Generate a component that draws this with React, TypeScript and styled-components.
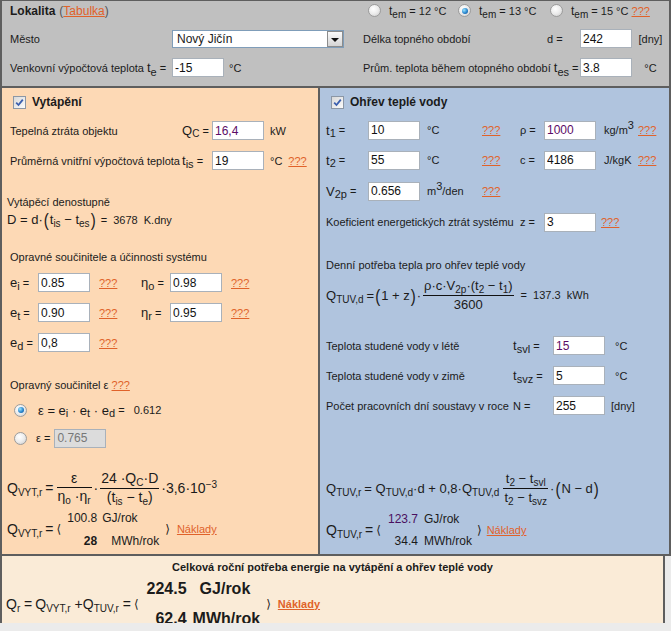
import React from "react";
import styled, { createGlobalStyle } from "styled-components";

const FONT = `"Liberation Sans", Arial, sans-serif`;
const BORDER = "#5e5e5e";

const GlobalStyle = createGlobalStyle`
  *, *::before, *::after { box-sizing: border-box; }
  html, body { margin: 0; padding: 0; }
  body {
    background: #ebebeb;
    font-family: ${FONT};
    font-size: 11px;
    color: #1b1b1b;
  }
`;

const Page = styled.div`
  width: 671px;
  height: 631px;
  overflow: hidden;
`;

/* ---------- small bits ---------- */

const Link = styled.a<{ $bold?: boolean }>`
  color: #e0622a;
  text-decoration: underline;
  font-weight: ${(p) => (p.$bold ? 700 : 400)};
  cursor: pointer;
`;

const Muted = styled.span`
  color: #555;
  font-size: 12px;
`;

const Sub = styled.span<{ $size?: number; $drop?: number }>`
  font-size: ${(p) => p.$size ?? 11}px;
  position: relative;
  top: ${(p) => p.$drop ?? 3}px;
`;

const Sup = styled.span<{ $size?: number }>`
  font-size: ${(p) => p.$size ?? 10}px;
  position: relative;
  top: -5px;
`;

const Var = styled.span<{ $size?: number }>`
  font-size: ${(p) => p.$size ?? 13}px;
`;

const Radio = styled.span<{ $on?: boolean }>`
  flex: none;
  width: 13px;
  height: 13px;
  border-radius: 50%;
  border: 1px solid #9c9c9c;
  background: radial-gradient(circle at 40% 35%, #ffffff 0%, #ececec 50%, #c9c9c9 100%);
  display: inline-flex;
  align-items: center;
  justify-content: center;

  &::after {
    content: "";
    display: ${(p) => (p.$on ? "block" : "none")};
    width: 6px;
    height: 6px;
    border-radius: 50%;
    background: radial-gradient(circle at 35% 35%, #9be6ff 0%, #2a86cf 55%, #0d4c87 100%);
  }
`;

const CheckBox = styled.span`
  flex: none;
  width: 13px;
  height: 13px;
  border: 1px solid #8c97a5;
  background: linear-gradient(135deg, #d9d9d9, #fbfbfb);
  display: inline-flex;
  align-items: center;
  justify-content: center;
`;

const Checked = () => (
  <CheckBox>
    <svg width="9" height="9" viewBox="0 0 9 9">
      <path d="M1.2 4.6 L3.5 7 L7.8 1.6" fill="none" stroke="#3b5fae" strokeWidth="1.8" />
    </svg>
  </CheckBox>
);

const Field = styled.input<{ $w?: number; $tint?: boolean; $off?: boolean }>`
  flex: none;
  width: ${(p) => p.$w ?? 52}px;
  height: 19px;
  margin: 0;
  border: 1px solid #a9b1ba;
  background: ${(p) => (p.$off ? "#dcdcdc" : "#fff")};
  padding: 0 2px;
  font: 12px ${FONT};
  color: ${(p) => (p.$off ? "#777" : p.$tint ? "#5c0c66" : "#111")};
  outline: none;
`;

const Help = () => <Link>???</Link>;

/* ---------- top panel ---------- */

const TopPanel = styled.section`
  height: 88px;
  background: #c0c0c0;
  border-style: solid;
  border-color: ${BORDER};
  border-width: 1px 2px 2px 2px;
  padding-left: 8px;
`;

const TopHeader = styled.div`
  height: 19px;
  display: flex;
  align-items: center;
  white-space: nowrap;
`;

const HeaderTitle = styled.div<{ $w: number }>`
  width: ${(p) => p.$w}px;
  display: flex;
  align-items: center;
  gap: 4px;
`;

const PanelTitle = styled.span`
  font-weight: 700;
  font-size: 12px;
`;

const RadioOption = styled.label<{ $w?: number }>`
  display: flex;
  align-items: center;
  gap: 8px;
  width: ${(p) => (p.$w ? `${p.$w}px` : "auto")};
  font-size: 11px;
`;

const TopGrid = styled.div`
  display: grid;
  grid-template-columns: 162px 191px 177px 40px 53px 35px;
  grid-auto-rows: 29px;
  align-items: center;
  margin-top: 4px;
  white-space: nowrap;
  font-size: 11px;
`;

const GridCell = styled.div<{ $span?: number; $pl?: number; $center?: boolean }>`
  grid-column: span ${(p) => p.$span ?? 1};
  padding-left: ${(p) => p.$pl ?? 0}px;
  display: flex;
  align-items: center;
  justify-content: ${(p) => (p.$center ? "center" : "flex-start")};
  gap: 5px;
`;

const Select = styled.div`
  width: 172px;
  height: 18px;
  background: #fff;
  border: 1px solid #7f9db9;
  display: flex;
  align-items: center;
  padding-left: 4px;
  font-size: 12px;
`;

const SelectText = styled.span`
  flex: 1;
`;

const SelectButton = styled.span`
  width: 16px;
  height: 16px;
  border: 1px solid #8c8c8c;
  background: linear-gradient(#fbfbfb, #d4d4d4);
  display: flex;
  align-items: center;
  justify-content: center;

  &::after {
    content: "";
    border-left: 4px solid transparent;
    border-right: 4px solid transparent;
    border-top: 4px solid #111;
    margin-top: 2px;
  }
`;

/* ---------- columns ---------- */

const Columns = styled.div`
  display: flex;
  height: 468px;
`;

const Panel = styled.section<{ $bg: string; $w?: number; $left?: boolean; $pad: number }>`
  background: ${(p) => p.$bg};
  width: ${(p) => (p.$w ? `${p.$w}px` : "auto")};
  flex: ${(p) => (p.$w ? "none" : "1")};
  border-style: solid;
  border-color: ${BORDER};
  border-width: 0 2px 2px ${(p) => (p.$left ? 2 : 0)}px;
  padding: 4px 0 0 ${(p) => p.$pad}px;
  display: flex;
  flex-direction: column;
  white-space: nowrap;
`;

const Row = styled.div<{ $h?: number; $mt?: number; $pl?: number }>`
  display: flex;
  align-items: center;
  height: ${(p) => p.$h ?? 30}px;
  margin-top: ${(p) => p.$mt ?? 0}px;
  padding-left: ${(p) => p.$pl ?? 0}px;
  flex: none;
`;

const Cell = styled.span<{ $w?: number; $ml?: number }>`
  flex: none;
  display: inline-flex;
  align-items: center;
  width: ${(p) => (p.$w ? `${p.$w}px` : "auto")};
  margin-left: ${(p) => p.$ml ?? 0}px;
`;

const SectionTitle = styled.span<{ $ml?: number }>`
  font-weight: 700;
  font-size: 12px;
  margin-left: ${(p) => p.$ml ?? 6}px;
`;

/* ---------- formulas ---------- */

const Formula = styled.div<{ $h?: number; $mt?: number; $size?: number }>`
  display: flex;
  align-items: center;
  height: ${(p) => p.$h ?? 36}px;
  margin-top: ${(p) => p.$mt ?? 0}px;
  font-size: ${(p) => p.$size ?? 14}px;
  font-family: ${FONT};
  white-space: pre;
  flex: none;
`;

const Txt = styled.span<{ $ml?: number; $size?: number; $bold?: boolean }>`
  margin-left: ${(p) => p.$ml ?? 0}px;
  font-size: ${(p) => (p.$size ? `${p.$size}px` : "inherit")};
  font-weight: ${(p) => (p.$bold ? 700 : 400)};
`;

const Paren = styled.span<{ $size?: number }>`
  display: inline-block;
  font-size: ${(p) => p.$size ?? 15}px;
  transform: scaleY(1.25);
  line-height: 1;
  margin: 0 1px;
  font-weight: 300;
`;

const FracBox = styled.span<{ $ml?: number }>`
  display: inline-flex;
  flex-direction: column;
  align-items: center;
  margin: 0 2px 0 ${(p) => p.$ml ?? 2}px;
`;

const FracPart = styled.span`
  line-height: 17px;
  padding: 0 1px;
`;

const FracLine = styled.span`
  align-self: stretch;
  height: 1px;
  background: #111;
`;

const Frac = ({ top, bottom, ml }: { top: React.ReactNode; bottom: React.ReactNode; ml?: number }) => (
  <FracBox $ml={ml}>
    <FracPart>{top}</FracPart>
    <FracLine />
    <FracPart>{bottom}</FracPart>
  </FracBox>
);

const Angle = styled.span<{ $ml?: number; $size?: number }>`
  font-family: "DejaVu Sans", ${FONT};
  font-size: ${(p) => p.$size ?? 12}px;
  margin-left: ${(p) => p.$ml ?? 0}px;
  color: #222;
`;

const Stack = styled.div<{ $gap: number; $ml?: number; $size?: number; $bold?: boolean }>`
  display: flex;
  flex-direction: column;
  gap: ${(p) => p.$gap}px;
  margin-left: ${(p) => p.$ml ?? 0}px;
  font-size: ${(p) => p.$size ?? 12}px;
  font-weight: ${(p) => (p.$bold ? 700 : 400)};
`;

const StackLine = styled.div`
  display: flex;
  align-items: center;
  line-height: 18px;
`;

const Num = styled.span<{ $w: number; $bold?: boolean; $tint?: boolean }>`
  width: ${(p) => p.$w}px;
  text-align: right;
  font-weight: ${(p) => (p.$bold ? 700 : "inherit")};
  color: ${(p) => (p.$tint ? "#4a1060" : "inherit")};
`;

const Unit = styled.span<{ $ml: number }>`
  margin-left: ${(p) => p.$ml}px;
`;

const Plain = styled.span<{ $ml?: number }>`
  font-size: 11px;
  margin-left: ${(p) => p.$ml ?? 0}px;
`;

/* ---------- bottom ---------- */

const BottomPanel = styled.section`
  width: 665px;
  height: 67px;
  overflow: hidden;
  background: #faebd7;
  border-left: 2px solid ${BORDER};
  border-right: 2px solid ${BORDER};
  padding-left: 4px;
  white-space: nowrap;
`;

const BottomTitle = styled.div`
  height: 22px;
  display: flex;
  align-items: center;
  justify-content: center;
  font-weight: 700;
  font-size: 11px;
  padding-right: 4px;
`;

const BottomRow = styled.div`
  display: flex;
  align-items: center;
  height: 51px;
  font-size: 14px;
  white-space: pre;
`;

const Q = ({ sub, size }: { sub: string; size?: number }) => (
  <span>
    Q<Sub $size={size ?? 10}>{sub}</Sub>
  </span>
);

const Tem = ({ value }: { value: string }) => (
  <span>
    <Var $size={12}>t</Var>
    <Sub $size={10} $drop={3}>
      em
    </Sub>{" "}
    = {value} °C
  </span>
);

export default function App() {
  return (
    <>
      <GlobalStyle />
      <Page>
        <TopPanel>
          <TopHeader>
            <HeaderTitle $w={358}>
              <PanelTitle>Lokalita</PanelTitle>
              <Muted>
                (<Link>Tabulka</Link>)
              </Muted>
            </HeaderTitle>
            <RadioOption $w={90}>
              <Radio />
              <Tem value="12" />
            </RadioOption>
            <RadioOption $w={92}>
              <Radio $on />
              <Tem value="13" />
            </RadioOption>
            <RadioOption>
              <Radio />
              <span>
                <Tem value="15" /> <Help />
              </span>
            </RadioOption>
          </TopHeader>
          <TopGrid>
            <GridCell>Město</GridCell>
            <GridCell>
              <Select>
                <SelectText>Nový Jičín</SelectText>
                <SelectButton />
              </Select>
            </GridCell>
            <GridCell>Délka topného období</GridCell>
            <GridCell $pl={7}>d =</GridCell>
            <GridCell>
              <Field readOnly value="242" />
            </GridCell>
            <GridCell $center>[dny]</GridCell>

            <GridCell>
              <span>
                Venkovní výpočtová teplota <Var>t</Var>
                <Sub $drop={4}>e</Sub> =
              </span>
            </GridCell>
            <GridCell>
              <Field readOnly value="-15" />
              °C
            </GridCell>
            <GridCell $span={2}>
              <span>
                Prům. teplota během otopného období <Var>t</Var>
                <Sub $drop={4}>es</Sub> =
              </span>
            </GridCell>
            <GridCell>
              <Field readOnly value="3.8" />
            </GridCell>
            <GridCell $center>°C</GridCell>
          </TopGrid>
        </TopPanel>

        <Columns>
          <Panel $bg="#fdd9b5" $w={320} $left $pad={5}>
            <Row $h={20} $pl={6}>
              <Checked />
              <SectionTitle>Vytápění</SectionTitle>
            </Row>
            <Row $mt={3.5} $pl={3}>
              <Cell $w={172}>Tepelná ztráta objektu</Cell>
              <Cell $w={30}>
                <Var>Q</Var>
                <Sub $size={10}>C</Sub>&nbsp;=
              </Cell>
              <Field readOnly value="16,4" $tint />
              <Cell $ml={6}>kW</Cell>
            </Row>
            <Row $pl={3}>
              <Cell $w={172}>Průměrná vnitřní výpočtová teplota</Cell>
              <Cell $w={30}>
                <Var>t</Var>
                <Sub $size={11}>is</Sub>&nbsp;=
              </Cell>
              <Field readOnly value="19" />
              <Cell $ml={6}>°C</Cell>
              <Cell $ml={6}>
                <Help />
              </Cell>
            </Row>

            <Row $h={18} $mt={17}>
              Vytápěcí denostupně
            </Row>
            <Formula $h={18} $size={13}>
              <span>D = d·</span>
              <Paren>(</Paren>
              <span>
                t<Sub $size={10}>is</Sub> − t<Sub $size={10}>es</Sub>
              </span>
              <Paren>)</Paren>
              <Plain $ml={4}>=  3678  K.dny</Plain>
            </Formula>

            <Row $h={18} $mt={19.5} $pl={3}>
              Opravné součinitele a účinnosti systému
            </Row>
            <Row $mt={1.5} $pl={3}>
              <Cell $w={28}>
                <Var>e</Var>
                <Sub>i</Sub>&nbsp;=
              </Cell>
              <Field readOnly value="0.85" />
              <Cell $w={42} $ml={9}>
                <Help />
              </Cell>
              <Cell $w={29}>
                <Var>η</Var>
                <Sub>o</Sub>&nbsp;=
              </Cell>
              <Field readOnly value="0.98" />
              <Cell $ml={9}>
                <Help />
              </Cell>
            </Row>
            <Row $pl={3}>
              <Cell $w={28}>
                <Var>e</Var>
                <Sub>t</Sub>&nbsp;=
              </Cell>
              <Field readOnly value="0.90" />
              <Cell $w={42} $ml={9}>
                <Help />
              </Cell>
              <Cell $w={29}>
                <Var>η</Var>
                <Sub>r</Sub>&nbsp;=
              </Cell>
              <Field readOnly value="0.95" />
              <Cell $ml={9}>
                <Help />
              </Cell>
            </Row>
            <Row $pl={3}>
              <Cell $w={28}>
                <Var>e</Var>
                <Sub>d</Sub>&nbsp;=
              </Cell>
              <Field readOnly value="0,8" />
              <Cell $ml={9}>
                <Help />
              </Cell>
            </Row>

            <Row $h={18} $mt={18.5} $pl={3}>
              Opravný součinitel ε&nbsp;
              <Help />
            </Row>
            <Row $h={28} $mt={2} $pl={7}>
              <Radio $on />
              <Cell $ml={11}>
                <Var>ε = e</Var>
                <Sub>i</Sub>
                <Var>&nbsp;· e</Var>
                <Sub>t</Sub>
                <Var>&nbsp;· e</Var>
                <Sub>d</Sub>
                &nbsp;=&nbsp;&nbsp;&nbsp;0.612
              </Cell>
            </Row>
            <Row $h={28} $pl={7}>
              <Radio />
              <Cell $ml={9}>ε =</Cell>
              <Cell $ml={4}>
                <Field readOnly value="0.765" $off />
              </Cell>
            </Row>

            <Formula $mt={18}>
              <Q sub="VYT,r" />
              <Txt $ml={3}>=</Txt>
              <Frac
                ml={3}
                top={<span>ε</span>}
                bottom={
                  <span>
                    η<Sub $size={10}>o</Sub> ·η<Sub $size={10}>r</Sub>
                  </span>
                }
              />
              <span>·</span>
              <Frac
                top={
                  <span>
                    24 ·Q<Sub $size={10}>C</Sub>·D
                  </span>
                }
                bottom={
                  <span>
                    (t<Sub $size={10}>is</Sub> − t<Sub $size={10}>e</Sub>)
                  </span>
                }
              />
              <span>
                ·3,6·10<Sup>−3</Sup>
              </span>
            </Formula>
            <Formula $mt={5}>
              <Q sub="VYT,r" />
              <Txt $ml={3}>=</Txt>
              <Angle $ml={3}>⟨</Angle>
              <Stack $gap={5} $ml={6} $size={12}>
                <StackLine>
                  <Num $w={30}>100.8</Num>
                  <Unit $ml={5}>GJ/rok</Unit>
                </StackLine>
                <StackLine>
                  <Num $w={30} $bold>
                    28
                  </Num>
                  <Unit $ml={14}>MWh/rok</Unit>
                </StackLine>
              </Stack>
              <Angle $ml={6}>⟩</Angle>
              <Plain $ml={7}>
                <Link>Náklady</Link>
              </Plain>
            </Formula>
          </Panel>

          <Panel $bg="#b0c4de" $pad={6}>
            <Row $h={20} $pl={5}>
              <Checked />
              <SectionTitle>Ohřev teplé vody</SectionTitle>
            </Row>
            <Row $mt={3}>
              <Cell $w={42}>
                <Var>t</Var>
                <Sub>1</Sub>&nbsp;=
              </Cell>
              <Field readOnly value="10" />
              <Cell $w={55} $ml={7}>
                °C
              </Cell>
              <Cell $w={38}>
                <Help />
              </Cell>
              <Cell $w={24}>ρ =</Cell>
              <Field readOnly value="1000" $tint />
              <Cell $w={34} $ml={8}>
                kg/m<Sup $size={11}>3</Sup>
              </Cell>
              <Help />
            </Row>
            <Row>
              <Cell $w={42}>
                <Var>t</Var>
                <Sub>2</Sub>&nbsp;=
              </Cell>
              <Field readOnly value="55" />
              <Cell $w={55} $ml={7}>
                °C
              </Cell>
              <Cell $w={38}>
                <Help />
              </Cell>
              <Cell $w={24}>c =</Cell>
              <Field readOnly value="4186" />
              <Cell $w={34} $ml={8}>
                J/kgK
              </Cell>
              <Help />
            </Row>
            <Row $h={32}>
              <Cell $w={42}>
                <Var>V</Var>
                <Sub>2p</Sub>&nbsp;=
              </Cell>
              <Field readOnly value="0.656" />
              <Cell $w={55} $ml={7}>
                m<Sup $size={11}>3</Sup>/den
              </Cell>
              <Help />
            </Row>
            <Row>
              <Cell $w={194}>Koeficient energetických ztrát systému</Cell>
              <Cell $w={24}>z =</Cell>
              <Field readOnly value="3" />
              <Cell $ml={5}>
                <Help />
              </Cell>
            </Row>

            <Row $h={18} $mt={19}>
              Denní potřeba tepla pro ohřev teplé vody
            </Row>
            <Formula $h={40} $mt={1} $size={13}>
              <Q sub="TUV,d" />
              <Txt $ml={3}>=</Txt>
              <Paren>(</Paren>
              <span>1 + z</span>
              <Paren>)</Paren>
              <span>·</span>
              <Frac
                top={
                  <span>
                    ρ·c·V<Sub $size={10}>2p</Sub>·(t<Sub $size={10}>2</Sub> − t<Sub $size={10}>1</Sub>)
                  </span>
                }
                bottom={<span>3600</span>}
              />
              <Plain $ml={5}>=  137.3  kWh</Plain>
            </Formula>

            <Row $mt={15.5}>
              <Cell $w={187}>Teplota studené vody v létě</Cell>
              <Cell $w={40}>
                <Var>t</Var>
                <Sub>svl</Sub>&nbsp;=
              </Cell>
              <Field readOnly value="15" $tint />
              <Cell $ml={10}>°C</Cell>
            </Row>
            <Row>
              <Cell $w={187}>Teplota studené vody v zimě</Cell>
              <Cell $w={40}>
                <Var>t</Var>
                <Sub>svz</Sub>&nbsp;=
              </Cell>
              <Field readOnly value="5" />
              <Cell $ml={10}>°C</Cell>
            </Row>
            <Row>
              <Cell $w={187}>Počet pracovních dní soustavy v roce</Cell>
              <Cell $w={40}>N =</Cell>
              <Field readOnly value="255" />
              <Cell $ml={6}>[dny]</Cell>
            </Row>

            <Formula $mt={49.5} $size={13}>
              <Q sub="TUV,r" />
              <Txt $ml={3}>= </Txt>
              <Q sub="TUV,d" />
              <span>·d + 0,8·</span>
              <Q sub="TUV,d" />
              <Frac
                ml={4}
                top={
                  <span>
                    t<Sub $size={10}>2</Sub> − t<Sub $size={10}>svl</Sub>
                  </span>
                }
                bottom={
                  <span>
                    t<Sub $size={10}>2</Sub> − t<Sub $size={10}>svz</Sub>
                  </span>
                }
              />
              <span>·</span>
              <Paren>(</Paren>
              <span>N − d</span>
              <Paren>)</Paren>
            </Formula>
            <Formula $mt={6}>
              <Q sub="TUV,r" />
              <Txt $ml={3}>=</Txt>
              <Angle $ml={3}>⟨</Angle>
              <Stack $gap={4} $ml={7} $size={12}>
                <StackLine>
                  <Num $w={30} $tint>
                    123.7
                  </Num>
                  <Unit $ml={6}>GJ/rok</Unit>
                </StackLine>
                <StackLine>
                  <Num $w={30}>34.4</Num>
                  <Unit $ml={6}>MWh/rok</Unit>
                </StackLine>
              </Stack>
              <Angle $ml={5}>⟩</Angle>
              <Plain $ml={5}>
                <Link>Náklady</Link>
              </Plain>
            </Formula>
          </Panel>
        </Columns>

        <BottomPanel>
          <BottomTitle>Celková roční potřeba energie na vytápění a ohřev teplé vody</BottomTitle>
          <BottomRow>
            <span>
              Q<Sub $size={10}>r</Sub> =
            </span>
            <Txt $ml={3}>
              <Q sub="VYT,r" />
            </Txt>
            <span> +</span>
            <Q sub="TUV,r" />
            <span> =</span>
            <Angle $ml={3}>⟨</Angle>
            <Stack $gap={12} $ml={6} $size={16} $bold>
              <StackLine>
                <Num $w={42}>224.5</Num>
                <Unit $ml={13}>GJ/rok</Unit>
              </StackLine>
              <StackLine>
                <Num $w={42}>62.4</Num>
                <Unit $ml={6}>MWh/rok</Unit>
              </StackLine>
            </Stack>
            <Angle $ml={6}>⟩</Angle>
            <Plain $ml={7}>
              <Link $bold>Náklady</Link>
            </Plain>
          </BottomRow>
        </BottomPanel>
      </Page>
    </>
  );
}
